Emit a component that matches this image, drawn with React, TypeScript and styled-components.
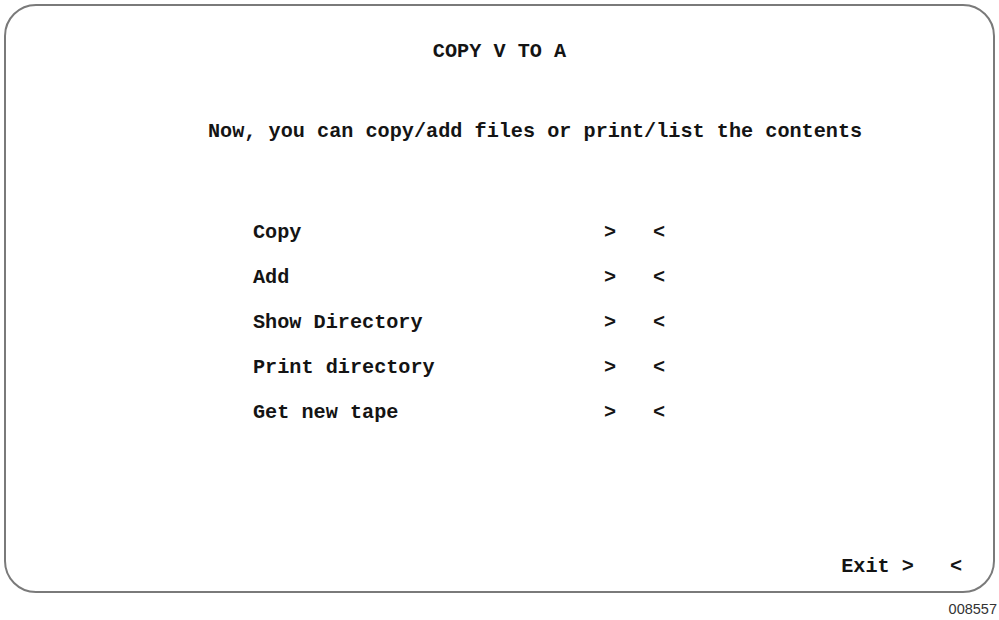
import React from 'react';
import styled, { createGlobalStyle } from 'styled-components';

const GlobalStyle = createGlobalStyle`
  html, body {
    margin: 0;
    padding: 0;
    background: #ffffff;
  }
  body {
    width: 999px;
    height: 620px;
    overflow: hidden;
    font-family: 'Liberation Mono', 'Courier New', monospace;
    color: #141414;
  }
`;

const Page = styled.div`
  width: 999px;
  height: 620px;
  box-sizing: border-box;
  padding: 4px 4px 0 4px;
  display: flex;
  flex-direction: column;
`;

const Screen = styled.div`
  height: 589px;
  box-sizing: border-box;
  border: 2px solid #7a7a7a;
  border-radius: 32px;
  padding: 34px 31px 12px 0;
  display: flex;
  flex-direction: column;
  font-size: 20.2px;
  line-height: 24px;
  font-weight: 700;
`;

const Title = styled.div`
  text-align: center;
  padding-left: 31px;
`;

const Subtitle = styled.div`
  margin-top: 56px;
  padding-left: 202px;
  white-space: pre;
`;

const Menu = styled.div`
  margin-top: 77px;
  padding-left: 247px;
  display: grid;
  grid-template-columns: 351px 49px auto;
  row-gap: 21px;
`;

const Label = styled.span`
  white-space: pre;
`;

const Marker = styled.span<{ $gap?: number }>`
  margin-left: ${(p) => p.$gap ?? 0}px;
`;

const ExitRow = styled.div`
  margin-top: auto;
  display: flex;
  justify-content: flex-end;
  white-space: pre;
`;

const Ref = styled.div`
  align-self: flex-end;
  margin-top: 8px;
  margin-right: -2px;
  font-family: 'Liberation Sans', Arial, sans-serif;
  font-size: 14.5px;
  line-height: 16px;
  color: #333333;
`;

const items = ['Copy', 'Add', 'Show Directory', 'Print directory', 'Get new tape'];

const App = (): React.ReactElement => {
  return (
    <>
      <GlobalStyle />
      <Page>
        <Screen>
          <Title>COPY V TO A</Title>
          <Subtitle>Now, you can copy/add files or print/list the contents</Subtitle>
          <Menu>
            {items.map((item) => (
              <React.Fragment key={item}>
                <Label>{item}</Label>
                <Marker>&gt;</Marker>
                <Marker>&lt;</Marker>
              </React.Fragment>
            ))}
          </Menu>
          <ExitRow>
            <Label>Exit &gt;</Label>
            <Marker $gap={36}>&lt;</Marker>
          </ExitRow>
        </Screen>
        <Ref>008557</Ref>
      </Page>
    </>
  );
};

export default App;
